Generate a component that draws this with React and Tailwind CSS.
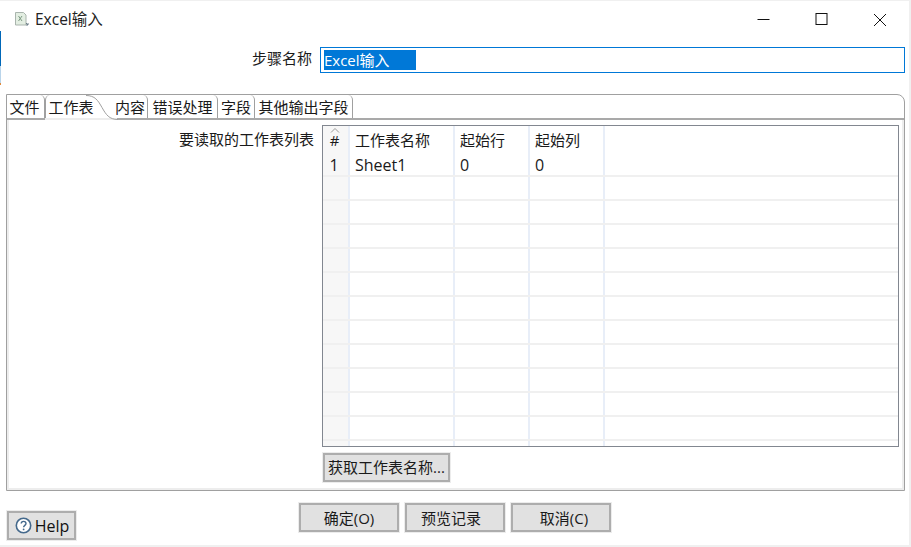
import React from "react";

const tabs = [
  { label: "文件", w: "w-[38px]", pad: "pr-[2px]" },
  { label: "工作表", w: "w-[56px]", pad: "pr-[5px]", active: true },
  { label: "内容", w: "w-[47px]", pad: "pl-[12px]" },
  { label: "错误处理", w: "w-[70px]" },
  { label: "字段", w: "w-[37px]" },
  { label: "其他输出字段", w: "w-[98px]" },
];

const rows = [1, 2, 3, 4, 5, 6, 7, 8, 9, 10, 11];

const GreyButton = ({ className, children }) => (
  <button className={`flex items-center justify-center bg-[#e1e1e1] border-2 border-[#adadad] outline-1 outline-[#ececec] text-[15px] text-[#1a1a1a] ${className}`}>
    {children}
  </button>
);

const Row = ({ num, name, a, b }) => (
  <div className="flex h-[24px] border-b-2 border-[#f0f0f0] items-center text-[16px]">
    <div className="w-[27px] h-full bg-[#f7f7f7] border-r-2 border-[#e8eef8] text-center pr-[3px] leading-[25px]">{num}</div>
    <div className="w-[105px] h-full border-r-2 border-[#e8eef8] pl-[5px] leading-[24px]">{name}</div>
    <div className="w-[75px] h-full border-r-2 border-[#e8eef8] pl-[5px] leading-[24px]">{a}</div>
    <div className="w-[75px] h-full border-r-2 border-[#e8eef8] pl-[5px] leading-[24px]">{b}</div>
    <div className="flex-1" />
  </div>
);

export default function App() {
  return (
    <div className="relative w-[911px] h-[547px] bg-white overflow-hidden border-t border-r-2 border-b-2 border-[#f0f0f0] text-[15px] text-[#1a1a1a] font-['Open_Sans','Noto_Sans_CJK_SC',sans-serif]">
      {/* window edge leftovers */}
      <div className="absolute left-0 top-[30px] w-[1px] h-[35px] bg-[#0067b8]" />
      <div className="absolute left-0 top-[65px] w-[1px] h-[17px] bg-[#b9d4ea]" />
      <div className="absolute left-0 top-[82px] w-[1px] h-[2px] bg-[#e08a3c]" />

      {/* title bar */}
      <div className="flex items-center h-[37px]">
        <svg width="16" height="16" viewBox="0 0 16 16" className="ml-[14px] mt-[-1px]">
          <path d="M1.5 1.5h8l2.5 2.5v10h-10.5z" fill="#e3eee2" stroke="#a9b4ad" />
          <path d="M4.5 5l3.5 5M8 5l-3.5 5" stroke="#7d9a83" strokeWidth="1" fill="none" />
          <path d="M12 12l2 2M14 12v2h-2" stroke="#6d7f88" strokeWidth="1" fill="none" />
        </svg>
        <span className="ml-[5px] text-[#222] text-[15.5px]">Excel输入</span>
        <div className="ml-auto flex items-center">
          <svg width="13" height="13" viewBox="0 0 13 13" className="mr-[45px]"><path d="M0.5 6.5h12" stroke="#111" /></svg>
          <svg width="13" height="13" viewBox="0 0 13 13" className="mr-[45px]"><rect x="1" y="0.5" width="11" height="11" fill="none" stroke="#111" /></svg>
          <svg width="14" height="14" viewBox="0 0 14 14" className="mr-[22px]"><path d="M1 1l12 12M13 1l-12 12" stroke="#111" /></svg>
        </div>
      </div>

      {/* step name */}
      <div className="flex items-center h-[26px] mt-[9px]">
        <div className="w-[312px] text-right pb-[4px]">步骤名称</div>
        <div className="ml-[8px] w-[585px] h-[26px] border border-[#0078d7] flex items-center pl-[3px]">
          <span className="bg-[#0078d7] text-white w-[92px] h-[20px] leading-[20px]">Excel输入</span>
        </div>
      </div>

      {/* tab folder */}
      <div className="ml-[6px] mt-[21px] w-[899px] h-[397px] border border-[#a0a0a0] rounded-tr-[8px] flex flex-col">
        <div className="relative flex h-[25px] border-b-2 border-[#a9a9a9] shrink-0">
          {tabs.map((t) => (
            <div
              key={t.label}
              className={`${t.w} ${t.pad || ""} ${t.active ? "border-l border-[#a0a0a0] rounded-tl-[5px]" : "border-r border-[#a0a0a0] rounded-tr-[5px]"} shrink-0 flex items-center justify-center leading-[24px]`}
            >
              {t.label}
            </div>
          ))}
          <div className="absolute left-[38px] w-[72px] top-[23px] h-[2px] bg-[#ededed]" />
          <svg width="32" height="25" viewBox="0 0 32 25" className="absolute left-[79px] top-0 pointer-events-none">
            <path d="M0 0.5c9 0 12 5 16 12s7 12 16 12" fill="none" stroke="#a0a0a0" />
          </svg>
        </div>

        <div className="flex-1 border-2 border-[#ededed] border-t-0 flex">
          <div className="w-[305px] text-right pt-[9px] leading-[20px] shrink-0">要读取的工作表列表</div>
          <div className="ml-[8px] mt-[5px] flex flex-col w-[577px]">
            <div className="h-[322px] border border-[#828790] overflow-hidden">
              <div className="flex h-[27px] leading-[28px]">
                <div className="relative w-[27px] h-full bg-[#f7f7f7] border-r-2 border-[#e8eef8] text-center pr-[2px]">
                  #
                  <svg width="10" height="5" viewBox="0 0 10 5" className="absolute left-[7px] top-[2px]"><path d="M1 4.5l4-4 4 4" fill="none" stroke="#9a9a9a" /></svg>
                </div>
                <div className="w-[105px] border-r-2 border-[#e8eef8] pl-[5px]">工作表名称</div>
                <div className="w-[75px] border-r-2 border-[#e8eef8] pl-[5px]">起始行</div>
                <div className="w-[75px] border-r-2 border-[#e8eef8] pl-[5px]">起始列</div>
                <div className="flex-1" />
              </div>
              <Row num="1" name="Sheet1" a="0" b="0" />
              {rows.map((r) => <Row key={r} />)}
              <div className="flex h-[10px]">
                <div className="w-[27px] bg-[#f7f7f7] border-r-2 border-[#e8eef8]" />
                <div className="w-[105px] border-r-2 border-[#e8eef8]" />
                <div className="w-[75px] border-r-2 border-[#e8eef8]" />
                <div className="w-[75px] border-r-2 border-[#e8eef8]" />
              </div>
            </div>
            <GreyButton className="w-[127px] h-[29px] mt-[6px] ml-[1px]">获取工作表名称...</GreyButton>
          </div>
        </div>
      </div>

      {/* bottom buttons */}
      <div className="relative h-[55px]">
        <div className="absolute left-[299px] top-[12px] flex gap-[6px]">
          <GreyButton className="w-[100px] h-[29px] pt-[1px]">确定(O)</GreyButton>
          <GreyButton className="w-[100px] h-[29px] pt-[1px] pr-[8px]">预览记录</GreyButton>
          <GreyButton className="w-[100px] h-[29px] pt-[1px] pl-[6px]">取消(C)</GreyButton>
        </div>
        <GreyButton className="absolute left-[7px] top-[20px] w-[69px] h-[29px] gap-[3px] pl-[1px] text-[#111] text-[16px]">
          <svg width="17" height="17" viewBox="0 0 17 17">
            <circle cx="8.5" cy="8.5" r="7.2" fill="#fff" stroke="#44698c" strokeWidth="1.6" />
            <path d="M6.2 6.6c0-3 4.8-3 4.8 0 0 1.8-2.4 1.7-2.4 3.6" fill="none" stroke="#44698c" strokeWidth="1.4" />
            <circle cx="8.6" cy="12.4" r="0.9" fill="#44698c" />
          </svg>
          Help
        </GreyButton>
      </div>
    </div>
  );
}
